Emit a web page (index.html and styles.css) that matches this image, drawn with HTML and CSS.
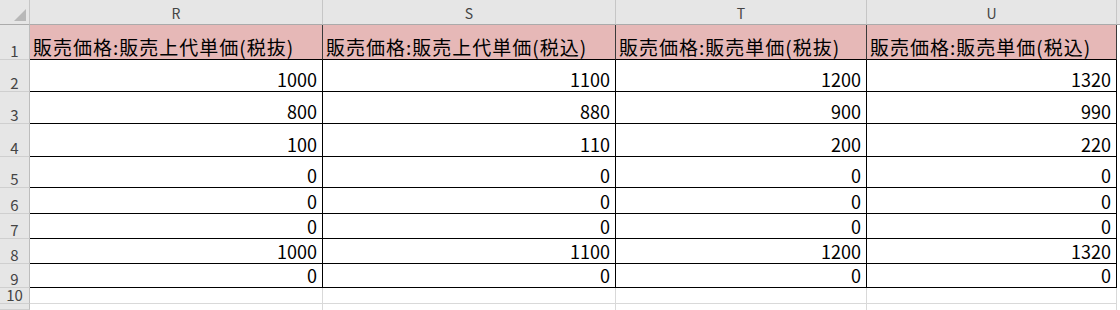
FILE: index.html
```html
<!DOCTYPE html>
<html lang="ja">
<head>
<meta charset="utf-8">
<title>Sheet</title>
<link rel="stylesheet" href="styles.css">
</head>
<body>
<div class="sheet">
  <div class="corner"><span class="tri"></span></div>
  <div class="colh">R</div>
  <div class="colh">S</div>
  <div class="colh">T</div>
  <div class="colh">U</div>
  <div class="colh fill"></div>

  <div class="rowh">1</div>
  <div class="cell head">販売価格:販売上代単価(税抜)</div>
  <div class="cell head">販売価格:販売上代単価(税込)</div>
  <div class="cell head">販売価格:販売単価(税抜)</div>
  <div class="cell head">販売価格:販売単価(税込)</div>
  <div class="fillcell"></div>

  <div class="rowh">2</div>
  <div class="cell num">1000</div><div class="cell num">1100</div><div class="cell num">1200</div><div class="cell num">1320</div><div class="fillcell"></div>

  <div class="rowh">3</div>
  <div class="cell num">800</div><div class="cell num">880</div><div class="cell num">900</div><div class="cell num">990</div><div class="fillcell"></div>

  <div class="rowh">4</div>
  <div class="cell num">100</div><div class="cell num">110</div><div class="cell num">200</div><div class="cell num">220</div><div class="fillcell"></div>

  <div class="rowh">5</div>
  <div class="cell num">0</div><div class="cell num">0</div><div class="cell num">0</div><div class="cell num">0</div><div class="fillcell"></div>

  <div class="rowh">6</div>
  <div class="cell num">0</div><div class="cell num">0</div><div class="cell num">0</div><div class="cell num">0</div><div class="fillcell"></div>

  <div class="rowh">7</div>
  <div class="cell num">0</div><div class="cell num">0</div><div class="cell num">0</div><div class="cell num">0</div><div class="fillcell"></div>

  <div class="rowh">8</div>
  <div class="cell num">1000</div><div class="cell num">1100</div><div class="cell num">1200</div><div class="cell num">1320</div><div class="fillcell"></div>

  <div class="rowh">9</div>
  <div class="cell num">0</div><div class="cell num">0</div><div class="cell num">0</div><div class="cell num">0</div><div class="fillcell"></div>

  <div class="rowh">10</div>
  <div class="cell empty"></div><div class="cell empty"></div><div class="cell empty"></div><div class="cell empty"></div><div class="fillcell"></div>

  <div class="rowh"></div>
  <div class="cell blank"></div><div class="cell blank"></div><div class="cell blank"></div><div class="cell blank"></div><div class="fillcell"></div>
</div>
</body>
</html>
```

FILE: styles.css
```css
html, body {
  margin: 0;
  padding: 0;
  background: #ffffff;
}

.sheet {
  display: grid;
  grid-template-columns: 30px 293px 293px 251px 250px 1fr;
  grid-template-rows: 25px 35px 32px 32px 33px 31px 26px 25px 25px 24px 16px 1fr;
  width: 1120px;
  height: 310px;
  overflow: hidden;
  font-family: "Noto Sans CJK JP", "Noto Sans", sans-serif;
  color: #000000;
}

.sheet > div {
  box-sizing: border-box;
  white-space: nowrap;
}

.corner {
  background: #e6e6e6;
  border-right: 1px solid #c6c6c6;
  border-bottom: 1px solid #ababab;
  display: flex;
  justify-content: flex-end;
  align-items: flex-end;
  padding: 0 3px 3px 0;
}

.tri {
  display: block;
  width: 12px;
  height: 12px;
  background: #b8b8b8;
  clip-path: polygon(100% 0, 100% 100%, 0 100%);
}

.colh {
  background: #e6e6e6;
  border-right: 1px solid #c6c6c6;
  border-bottom: 1px solid #ababab;
  display: flex;
  justify-content: center;
  align-items: center;
  padding-top: 2px;
  font-size: 14px;
  line-height: 16px;
  color: #444444;
}

.colh.fill {
  border-right: none;
}

.rowh {
  background: #e6e6e6;
  border-right: 1px solid #bdbdbd;
  border-bottom: 1px solid #cfcfcf;
  display: flex;
  justify-content: center;
  align-items: flex-end;
  font-size: 15px;
  line-height: 14px;
  padding-bottom: 1px;
  color: #444444;
}

.cell {
  border-right: 1px solid #000000;
  border-bottom: 1px solid #000000;
  display: flex;
  align-items: flex-end;
  font-size: 18px;
  line-height: 20px;
  padding-bottom: 2px;
}

.cell.head {
  background: #e6b8b7;
  justify-content: flex-start;
  padding-left: 3px;
  font-size: 19px;
  letter-spacing: 1px;
  border-right-color: #3a3a3a;
}

.cell.num {
  justify-content: flex-end;
  padding-right: 5px;
}

.cell.empty,
.cell.blank {
  border-right: 1px solid #d9d9d9;
  border-bottom: 1px solid #d9d9d9;
}

.cell.blank {
  border-bottom: none;
}

.fillcell {
  background: #ffffff;
}
```
